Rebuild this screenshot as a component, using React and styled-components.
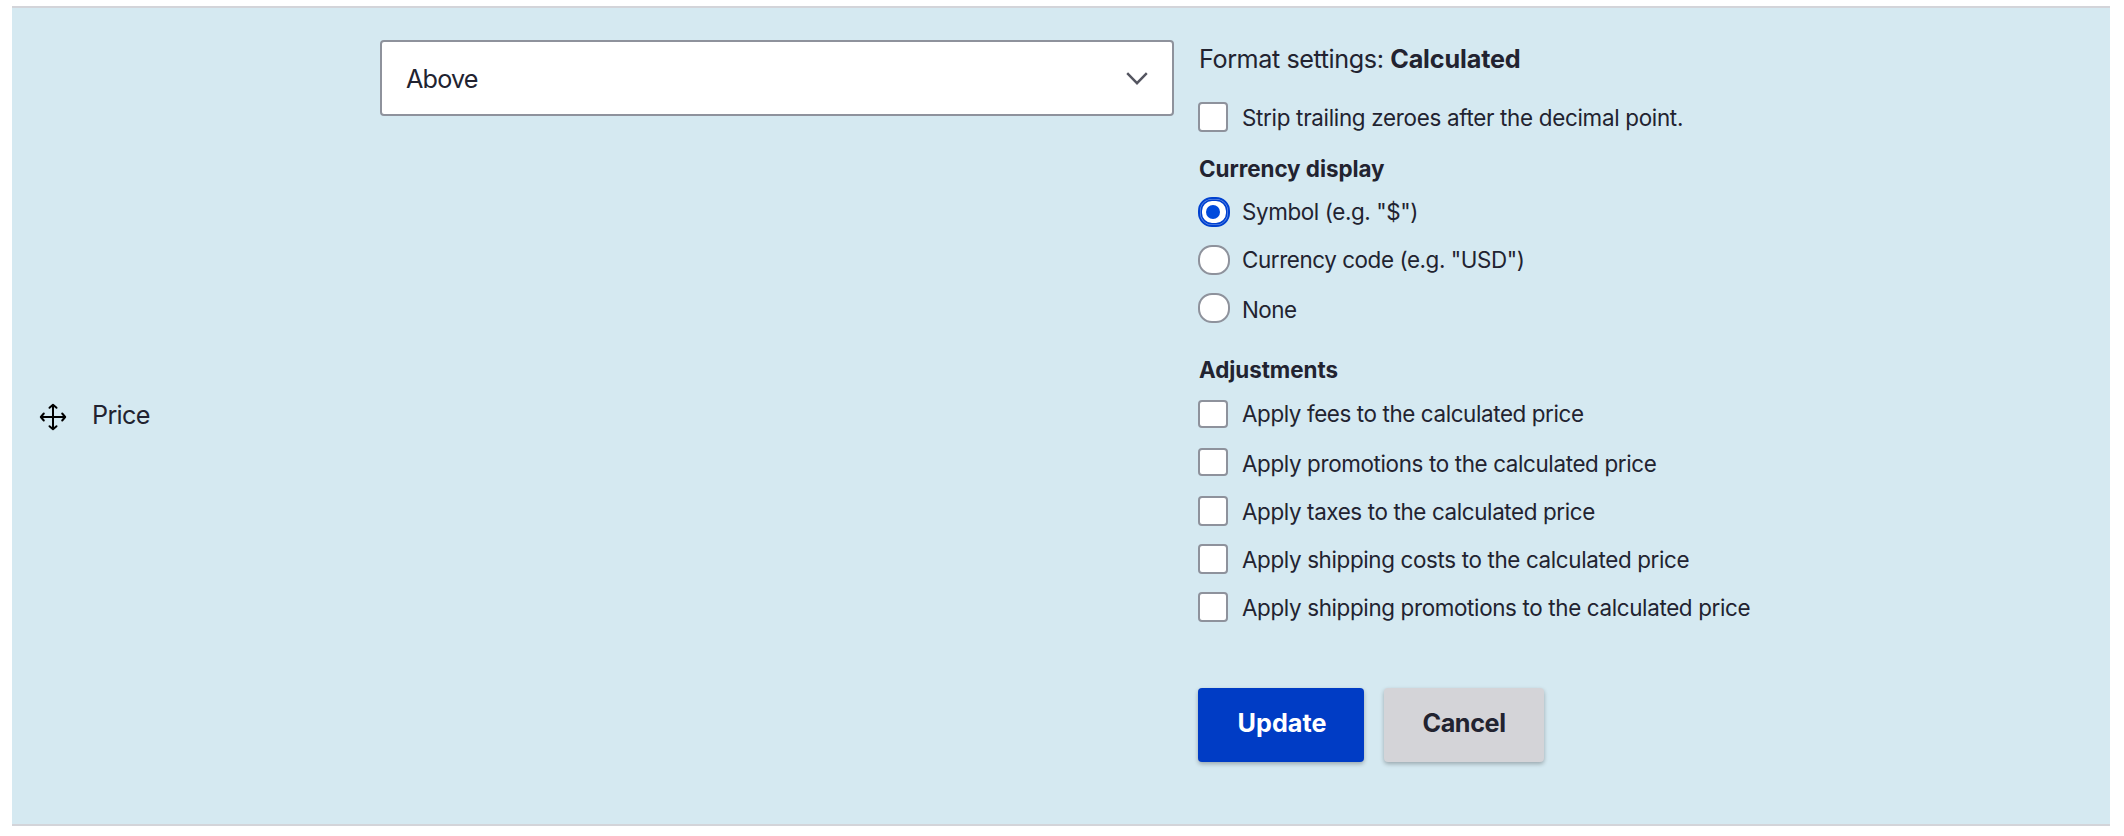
import React, { useState } from "react";
import styled, { createGlobalStyle } from "styled-components";

const ink = "#222330";
const border = "#8e929c";

const GlobalStyle = createGlobalStyle`
  *, *::before, *::after { box-sizing: border-box; }
  body {
    margin: 0;
    background: #fff;
    color: ${ink};
    font-family: Inter, "Liberation Sans", sans-serif;
    font-size: 25.2px;
  }
`;

const Row = styled.section`
  display: grid;
  grid-template-columns: 368px 794px 1fr;
  height: 820px;
  margin: 6px 14px 0 12px;
  border-top: 2px solid #d3d4d9;
  border-bottom: 2px solid #d3d4d9;
  background: #d5e9f1;
`;

const FieldCell = styled.div`
  display: flex;
  align-items: center;
  padding: 0 0 2px 27px;
`;

const DragHandle = styled.span`
  display: flex;
  margin-top: 3px;
  cursor: move;
`;

const FieldName = styled.span`
  margin-left: 25px;
  line-height: 32px;
  letter-spacing: -0.7px;
`;

const LabelCell = styled.div`
  padding-top: 32px;
`;

const Select = styled.div`
  display: flex;
  align-items: center;
  justify-content: space-between;
  height: 76px;
  padding: 0 24px;
  border: 2px solid ${border};
  border-radius: 4px;
  background: #fff;
  letter-spacing: -0.83px;
`;

const SelectValue = styled.span`
  margin-top: 2px;
  line-height: 32px;
`;

const SettingsCell = styled.div`
  display: flex;
  flex-direction: column;
  padding: 31px 0 0 24px;
`;

const Title = styled.div`
  height: 62.5px;
  padding-left: 1px;
  line-height: 40px;
  letter-spacing: -0.42px;

  strong {
    font-weight: 700;
    letter-spacing: -0.15px;
  }
`;

const Group = styled.div`
  display: flex;
  flex-direction: column;
`;

const Legend = styled.div`
  height: ${(p) => p.$height}px;
  padding: ${(p) => p.$top}px 0 0 1px;
  font-size: 22.4px;
  font-weight: 700;
  line-height: 28px;
  letter-spacing: -0.04px;
`;

const Option = styled.label`
  display: flex;
  align-items: flex-start;
  height: 48px;
`;

const Checkbox = styled.input`
  appearance: none;
  flex: none;
  width: 30px;
  height: ${(p) => p.$height || 30}px;
  margin: 0;
  border: 2px solid ${border};
  border-radius: 4px;
  background: #fff;
`;

const Radio = styled.input`
  appearance: none;
  display: grid;
  place-items: center;
  flex: none;
  width: 32px;
  height: 30px;
  margin: 0;
  border: 2px solid ${border};
  border-radius: 14px;
  background: #fff;

  &:checked {
    border-color: #0041d0;
    box-shadow: inset 0 0 0 0.5px #8aa7ea, inset 0 0 0 2px #0041d0;
  }

  &:checked::before {
    content: "";
    width: 14px;
    height: 14px;
    margin-right: 2px;
    border-radius: 50%;
    background: #004adc;
  }
`;

const OptionText = styled.span`
  margin-left: ${(p) => p.$gap}px;
  padding-top: ${(p) => p.$drop}px;
  font-size: 22.4px;
  line-height: 28px;
  letter-spacing: ${(p) => p.$tracking}px;
  white-space: nowrap;
`;

const Actions = styled.div`
  display: flex;
  gap: 20px;
  margin-top: 48px;
`;

const Button = styled.button`
  width: ${(p) => p.$width}px;
  height: 74px;
  padding: 0 0 5px ${(p) => (p.$primary ? 2 : 0)}px;
  border: 0;
  border-radius: 4px;
  background: ${(p) => (p.$primary ? "#003cc5" : "#d4d4d8")};
  color: ${(p) => (p.$primary ? "#fff" : ink)};
  box-shadow: 0 2px 4px rgba(0, 0, 0, 0.28);
  font-family: inherit;
  font-size: 25.2px;
  font-weight: 700;
  letter-spacing: ${(p) => (p.$primary ? 0 : -0.4)}px;
`;

const displays = [
  { id: "symbol", text: 'Symbol (e.g. "$")', drop: 1.5, tracking: -0.39 },
  { id: "code", text: 'Currency code (e.g. "USD")', drop: 1.5, tracking: -0.415 },
  { id: "none", text: "None", drop: 3.5, tracking: -0.5 },
];

const adjustments = [
  { text: "Apply fees to the calculated price", drop: 0, tracking: -0.39, height: 28 },
  { text: "Apply promotions to the calculated price", drop: 2, tracking: -0.36, height: 28 },
  { text: "Apply taxes to the calculated price", drop: 2, tracking: -0.37 },
  { text: "Apply shipping costs to the calculated price", drop: 2, tracking: -0.355 },
  { text: "Apply shipping promotions to the calculated price", drop: 2, tracking: -0.35 },
];

function MoveIcon() {
  return (
    <svg width="28" height="28" viewBox="0 0 28 28" fill="none" stroke="#000" strokeWidth="2" strokeLinecap="round" strokeLinejoin="round">
      <path d="M14 2v24M2 14h24M10.5 4.8L14 1.8l3.5 3M10.5 23.2l3.5 3 3.5-3M4.8 10.5l-3 3.5 3 3.5M23.2 10.5l3 3.5-3 3.5" />
    </svg>
  );
}

function Chevron() {
  return (
    <svg width="22" height="16" viewBox="0 0 22 16" fill="none" stroke="#545560" strokeWidth="2.4">
      <path d="M1.2 3.2L11 13.2l9.8-10" />
    </svg>
  );
}

export default function App() {
  const [display, setDisplay] = useState("symbol");
  return (
    <>
      <GlobalStyle />
      <Row>
        <FieldCell>
          <DragHandle><MoveIcon /></DragHandle>
          <FieldName>Price</FieldName>
        </FieldCell>
        <LabelCell>
          <Select>
            <SelectValue>Above</SelectValue>
            <Chevron />
          </Select>
        </LabelCell>
        <SettingsCell>
          <Title>Format settings: <strong>Calculated</strong></Title>
          <Option>
            <Checkbox type="checkbox" />
            <OptionText $gap={14} $drop={2.5} $tracking={-0.3}>Strip trailing zeroes after the decimal point.</OptionText>
          </Option>
          <Group>
            <Legend $height={47} $top={5}>Currency display</Legend>
            {displays.map((d) => (
              <Option key={d.id}>
                <Radio type="radio" name="display" checked={display === d.id} onChange={() => setDisplay(d.id)} />
                <OptionText $gap={12} $drop={d.drop} $tracking={d.tracking}>{d.text}</OptionText>
              </Option>
            ))}
          </Group>
          <Group>
            <Legend $height={59.5} $top={15.5}>Adjustments</Legend>
            {adjustments.map((a) => (
              <Option key={a.text}>
                <Checkbox type="checkbox" $height={a.height} />
                <OptionText $gap={14} $drop={a.drop} $tracking={a.tracking}>{a.text}</OptionText>
              </Option>
            ))}
          </Group>
          <Actions>
            <Button $primary $width={166}>Update</Button>
            <Button $width={160}>Cancel</Button>
          </Actions>
        </SettingsCell>
      </Row>
    </>
  );
}
